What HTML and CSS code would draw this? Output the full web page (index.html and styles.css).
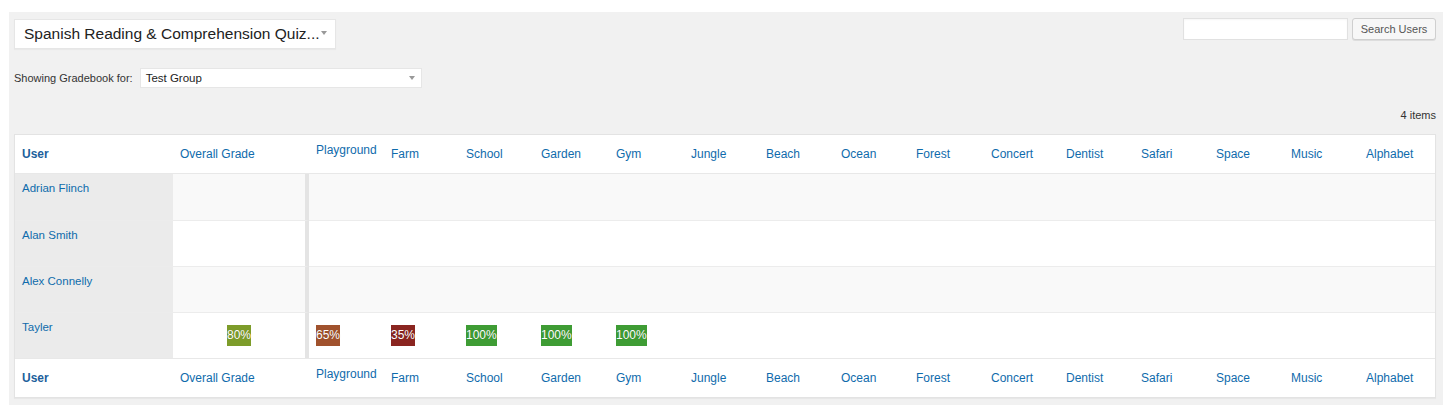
FILE: index.html
```html
<!doctype html>
<html>

<head>
    <title>Gradebook</title>
    <link rel="stylesheet" href="styles.css">
</head>

<body>
    <div class="wrap">
        <div class="panel">
            <div class="topbar">
                <div class="quiz-select">
                    <span>Spanish Reading &amp; Comprehension Quiz...</span>
                    <i class="arrow"></i>
                </div>
                <div class="search">
                    <input class="search-input" type="text">
                    <button class="search-btn">Search Users</button>
                </div>
            </div>

            <div class="filter">
                <label>Showing Gradebook for:</label>
                <div class="group-select">
                    <span>Test Group</span>
                    <i class="arrow"></i>
                </div>
            </div>

            <div class="count">4 items</div>

            <table class="grades">
                <colgroup>
                    <col class="c-user">
                    <col class="c-overall">
                    <col class="c-quiz"><col class="c-quiz"><col class="c-quiz"><col class="c-quiz"><col class="c-quiz">
                    <col class="c-quiz"><col class="c-quiz"><col class="c-quiz"><col class="c-quiz"><col class="c-quiz">
                    <col class="c-quiz"><col class="c-quiz"><col class="c-quiz"><col class="c-quiz"><col>
                </colgroup>
                <thead>
                    <tr>
                        <th class="user-head"><a href="#">User</a></th>
                        <th><a href="#">Overall Grade</a></th>
                        <th class="raised"><a href="#">Playground</a></th>
                        <th><a href="#">Farm</a></th>
                        <th><a href="#">School</a></th>
                        <th><a href="#">Garden</a></th>
                        <th><a href="#">Gym</a></th>
                        <th><a href="#">Jungle</a></th>
                        <th><a href="#">Beach</a></th>
                        <th><a href="#">Ocean</a></th>
                        <th><a href="#">Forest</a></th>
                        <th><a href="#">Concert</a></th>
                        <th><a href="#">Dentist</a></th>
                        <th><a href="#">Safari</a></th>
                        <th><a href="#">Space</a></th>
                        <th><a href="#">Music</a></th>
                        <th><a href="#">Alphabet</a></th>
                    </tr>
                </thead>
                <tbody>
                    <tr class="alt">
                        <td class="name"><a href="#">Adrian Flinch</a></td>
                        <td class="overall"></td>
                        <td></td><td></td><td></td><td></td><td></td><td></td><td></td><td></td>
                        <td></td><td></td><td></td><td></td><td></td><td></td><td></td>
                    </tr>
                    <tr>
                        <td class="name"><a href="#">Alan Smith</a></td>
                        <td class="overall"></td>
                        <td></td><td></td><td></td><td></td><td></td><td></td><td></td><td></td>
                        <td></td><td></td><td></td><td></td><td></td><td></td><td></td>
                    </tr>
                    <tr class="alt">
                        <td class="name"><a href="#">Alex Connelly</a></td>
                        <td class="overall"></td>
                        <td></td><td></td><td></td><td></td><td></td><td></td><td></td><td></td>
                        <td></td><td></td><td></td><td></td><td></td><td></td><td></td>
                    </tr>
                    <tr>
                        <td class="name"><a href="#">Tayler</a></td>
                        <td class="overall center"><span class="badge olive">80%</span></td>
                        <td><span class="badge sienna">65%</span></td>
                        <td><span class="badge maroon">35%</span></td>
                        <td><span class="badge green">100%</span></td>
                        <td><span class="badge green">100%</span></td>
                        <td><span class="badge green">100%</span></td>
                        <td></td><td></td><td></td><td></td><td></td><td></td><td></td><td></td><td></td><td></td>
                    </tr>
                </tbody>
                <tfoot>
                    <tr>
                        <th class="user-head"><a href="#">User</a></th>
                        <th><a href="#">Overall Grade</a></th>
                        <th class="raised"><a href="#">Playground</a></th>
                        <th><a href="#">Farm</a></th>
                        <th><a href="#">School</a></th>
                        <th><a href="#">Garden</a></th>
                        <th><a href="#">Gym</a></th>
                        <th><a href="#">Jungle</a></th>
                        <th><a href="#">Beach</a></th>
                        <th><a href="#">Ocean</a></th>
                        <th><a href="#">Forest</a></th>
                        <th><a href="#">Concert</a></th>
                        <th><a href="#">Dentist</a></th>
                        <th><a href="#">Safari</a></th>
                        <th><a href="#">Space</a></th>
                        <th><a href="#">Music</a></th>
                        <th><a href="#">Alphabet</a></th>
                    </tr>
                </tfoot>
            </table>
        </div>
    </div>
</body>

</html>
```

FILE: styles.css
```css
html,
body {
    margin: 0;
    padding: 0;
    background: #fff;
    font-family: "Liberation Sans", Arial, sans-serif;
    color: #333;
}

* {
    box-sizing: border-box;
}

.wrap {
    padding: 12px 9px 12px 9px;
}

.panel {
    background: #f1f1f1;
    padding: 7px 7px 7px 5px;
}

.topbar {
    display: flex;
    justify-content: space-between;
    align-items: flex-start;
}

.quiz-select {
    display: flex;
    align-items: center;
    width: 322px;
    height: 30px;
    padding-left: 9px;
    background: #fff;
    border: 1px solid #e6e6e6;
    box-shadow: 0 1px 1px rgba(0, 0, 0, .03);
    font-size: 15.5px;
    color: #222;
}

.arrow {
    display: inline-block;
    width: 0;
    height: 0;
    border-left: 3px solid transparent;
    border-right: 3px solid transparent;
    border-top: 4px solid #999;
}

.quiz-select .arrow {
    margin-left: 1px;
    margin-top: -3px;
}

.search {
    display: flex;
    margin-top: -1px;
}

.search-input {
    width: 165px;
    height: 22px;
    margin: 0;
    border: 1px solid #e1e1e1;
    background: #fff;
    box-shadow: inset 0 1px 2px rgba(0, 0, 0, .04);
}

.search-btn {
    width: 84px;
    height: 22px;
    margin: 0 0 0 4px;
    padding: 0;
    border: 1px solid #cfcfcf;
    border-radius: 3px;
    background: #f7f7f7;
    box-shadow: 0 1px 0 #ddd;
    font-family: "Liberation Sans", Arial, sans-serif;
    font-size: 11px;
    color: #555;
}

.filter {
    display: flex;
    align-items: center;
    margin-top: 19px;
    font-size: 11px;
    color: #333;
}

.group-select {
    display: flex;
    align-items: center;
    justify-content: space-between;
    width: 282px;
    height: 20px;
    margin-left: 7px;
    padding: 0 6px 0 5px;
    background: #fff;
    border: 1px solid #e6e6e6;
    font-size: 11.5px;
    color: #222;
}

.count {
    margin-top: 21px;
    margin-bottom: 12px;
    text-align: right;
    font-size: 11px;
    line-height: 13px;
    color: #333;
}

.grades {
    width: 1422px;
    table-layout: fixed;
    border-collapse: separate;
    border-spacing: 0;
    border: 1px solid #e3e3e3;
    box-shadow: 0 1px 1px rgba(0, 0, 0, .04);
    background: #fff;
}

.c-user {
    width: 158px;
}

.c-overall {
    width: 136px;
}

.c-quiz {
    width: 75px;
}

.grades th {
    height: 39px;
    padding: 0 7px;
    text-align: left;
    font-weight: normal;
    font-size: 12px;
    white-space: nowrap;
    vertical-align: middle;
}

.grades thead th {
    border-bottom: 1px solid #e8e8e8;
}

.grades tfoot th {
    height: 39px;
    border-top: 1px solid #e8e8e8;
}

.grades th.raised {
    padding-bottom: 9px;
}

.grades a {
    color: #0f6bac;
    text-decoration: none;
}

.grades th.user-head a {
    font-weight: bold;
    color: #1d5f9c;
}

.grades td {
    height: 46px;
    padding: 0 7px;
    border-top: 1px solid #ececec;
    font-size: 11.5px;
    vertical-align: middle;
}

.grades tbody tr:first-child td {
    border-top: 0;
}

.grades tr.alt td {
    background: #f9f9f9;
}

.grades td.name {
    background: #ebebeb !important;
    vertical-align: top;
    padding-top: 7px;
    line-height: 14px;
}

.grades td.overall {
    border-right: 4px solid #e4e4e4;
}

.grades td.center {
    text-align: center;
}

.badge {
    display: inline-block;
    height: 21px;
    padding: 0;
    line-height: 21px;
    font-size: 12px;
    color: #fff;
    text-shadow: 0 0 1px rgba(0, 0, 0, .25);
}

.badge.olive {
    background: #7d9c2a;
}

.badge.sienna {
    background: #a0522d;
}

.badge.maroon {
    background: #8a2520;
}

.badge.green {
    background: #3e9c34;
}
```
